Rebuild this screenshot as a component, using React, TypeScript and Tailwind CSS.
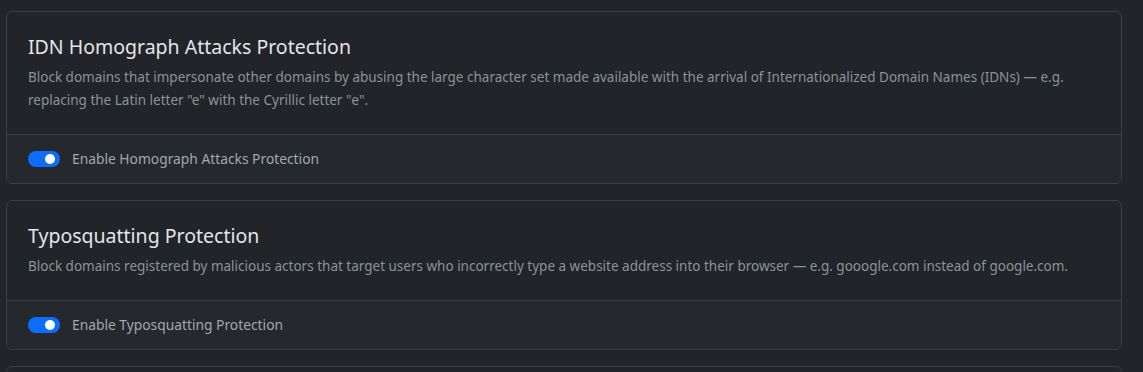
import React from "react";

function Toggle() {
  return (
    <span className="relative inline-flex h-4 w-8 shrink-0 items-center rounded-full bg-[#0d6efd]">
      <span className="absolute right-[5px] h-[10px] w-[10px] rounded-full bg-white" />
    </span>
  );
}

function Card({ title, desc, label }: { title: string; desc: React.ReactNode; label: string }) {
  return (
    <div className="overflow-hidden rounded-[6px] border border-[#3b3e43] bg-[#212428]">
      <div className="px-[21px] pt-[23px] pb-[22px]">
        <h2 className="text-[19.5px] leading-[24px] text-[#e3e5e8]">{title}</h2>
        <p className="mt-[7px] text-[13.5px] leading-[23px] text-[#8e9297]">{desc}</p>
      </div>
      <div className="flex items-center gap-3 border-t border-[#3b3e43] bg-[#25282c] px-[21px] py-[15px]">
        <Toggle />
        <span className="text-[13.8px] leading-[18px] text-[#a3a7ac]">{label}</span>
      </div>
    </div>
  );
}

export default function App() {
  return (
    <div
      className="h-[372px] w-full overflow-hidden bg-[#212428] pl-[6px] pt-[11px] pr-[21px]"
      style={{ fontFamily: '"Noto Sans", sans-serif' }}
    >
      <div className="flex flex-col gap-4">
        <Card
          title="IDN Homograph Attacks Protection"
          desc={
            <>
              Block domains that impersonate other domains by abusing the large character set made available with the arrival of Internationalized Domain Names (IDNs) — e.g.
              replacing the Latin letter "e" with the Cyrillic letter "е".
            </>
          }
          label="Enable Homograph Attacks Protection"
        />
        <Card
          title="Typosquatting Protection"
          desc="Block domains registered by malicious actors that target users who incorrectly type a website address into their browser — e.g. gooogle.com instead of google.com."
          label="Enable Typosquatting Protection"
        />
        <div className="h-10 rounded-[6px] border border-[#3b3e43] bg-[#212428]" />
      </div>
    </div>
  );
}
